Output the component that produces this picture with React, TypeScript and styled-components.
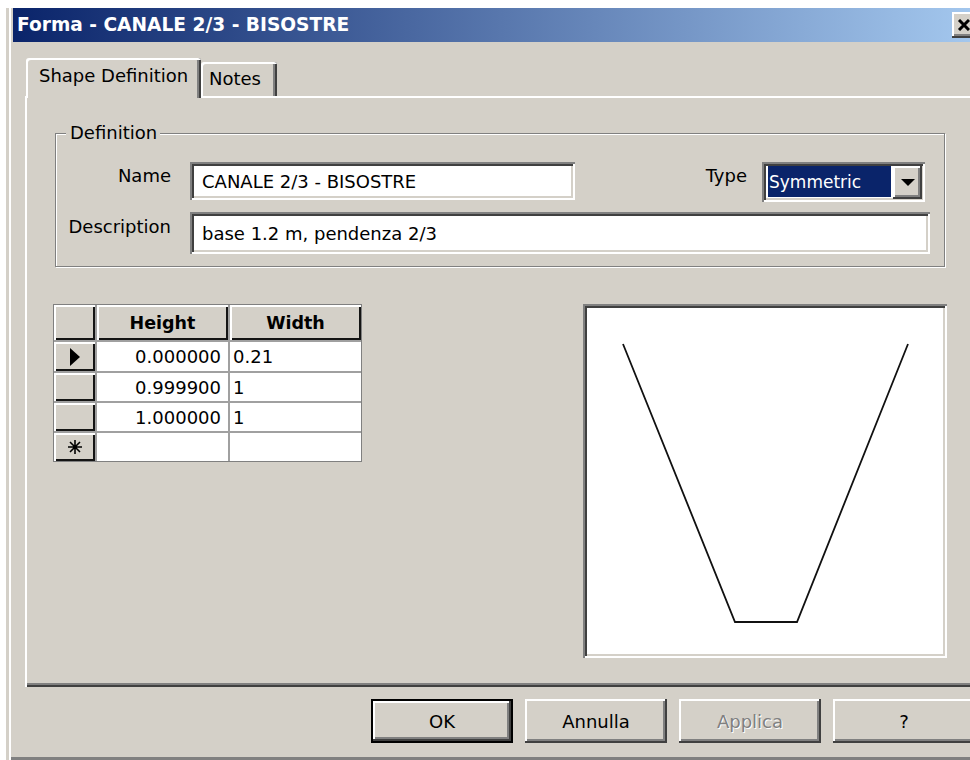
import React from "react";
import styled, { createGlobalStyle, css } from "styled-components";

const FACE = "#d4d0c8";
const SHADOW = "#808080";
const DARK = "#404040";
const FONT = `"DejaVu Sans", Verdana, sans-serif`;

const GlobalStyle = createGlobalStyle`
  html, body { margin: 0; padding: 0; background: #fff; overflow: hidden; }
  body { font-family: ${FONT}; font-size: 18px; color: #000; }
  * { box-sizing: border-box; }
`;

const raised = css`
  background: ${FACE};
  box-shadow: inset -2px -2px 0 ${DARK}, inset 2px 2px 0 #fff, inset -4px -4px 0 ${SHADOW};
`;

const sunken = css`
  background: #fff;
  box-shadow: inset 2px 2px 0 ${SHADOW}, inset -2px -2px 0 #fff, inset 4px 4px 0 ${DARK},
    inset -4px -4px 0 ${FACE};
`;

const Page = styled.div`
  width: 100vw;
  height: 100vh;
  padding: 8px 0 0 6px;
  overflow: hidden;
`;

const Window = styled.div`
  width: 990px;
  height: 752px;
  flex-shrink: 0;
  display: flex;
  flex-direction: column;
  background: ${FACE};
  padding: 0 7px 3px 7px;
  box-shadow: inset 3px 0 0 ${FACE}, inset 5px 0 0 #fff, inset 0 -3px 0 ${SHADOW};
`;

const TitleBar = styled.div`
  height: 34px;
  flex-shrink: 0;
  display: flex;
  align-items: center;
  justify-content: space-between;
  padding: 0 13px 0 4px;
  background: linear-gradient(to right, #0a246a, #a6caf0);
`;

const TitleText = styled.span`
  color: #fff;
  font-weight: bold;
  font-size: 18.6px;
  line-height: 22px;
  white-space: nowrap;
`;

const CloseButton = styled.div`
  ${raised};
  width: 24px;
  height: 26px;
  display: flex;
  align-items: center;
  justify-content: center;
`;

const Body = styled.div`
  flex: 1;
  display: flex;
  flex-direction: column;
  padding: 16px 12px 0 12px;
`;

const TabStrip = styled.div`
  height: 38px;
  display: flex;
  align-items: flex-end;
  padding-left: 1px;
  position: relative;
  z-index: 1;
`;

const Tab = styled.div<{ $active?: boolean; $w: number }>`
  width: ${(p) => p.$w}px;
  height: ${(p) => (p.$active ? 40 : 34)}px;
  margin-bottom: ${(p) => (p.$active ? -2 : 0)}px;
  align-self: ${(p) => (p.$active ? "flex-start" : "flex-end")};
  display: flex;
  align-items: center;
  padding-left: ${(p) => (p.$active ? 13 : 8)}px;
  padding-bottom: ${(p) => (p.$active ? 4 : 0)}px;
  background: ${FACE};
  border-radius: 3px 3px 0 0;
  box-shadow: inset 2px 2px 0 #fff, inset -2px 0 0 ${DARK}, inset -4px 0 0 ${SHADOW};
  white-space: nowrap;
  line-height: 20px;
`;

const Panel = styled.div`
  flex: 1;
  display: flex;
  flex-direction: column;
  padding: 27px 30px 0 28px;
  box-shadow: inset 2px 2px 0 #fff, inset -2px -2px 0 ${DARK}, inset -4px -4px 0 ${SHADOW};
`;

const GroupBox = styled.fieldset`
  margin: 0 2px;
  padding: 19px 19px 12px 0;
  border: 1px solid ${SHADOW};
  box-shadow: inset 1px 1px 0 #fff, 1px 1px 0 #fff;
  min-width: 0;
`;

const Legend = styled.legend`
  margin-left: 10px;
  padding: 0 3px 0 4px;
  line-height: 20px;
  background: ${FACE};
`;

const FormRow = styled.div<{ $mt?: number }>`
  display: flex;
  align-items: flex-start;
  margin-top: ${(p) => p.$mt ?? 0}px;
`;

const FieldLabel = styled.div<{ $w?: number; $gap: number; $top: number }>`
  width: ${(p) => (p.$w ? `${p.$w}px` : "auto")};
  flex-shrink: 0;
  text-align: right;
  margin-right: ${(p) => p.$gap}px;
  padding-top: ${(p) => p.$top}px;
  line-height: 20px;
  white-space: nowrap;
`;

const TextField = styled.div<{ $w: number; $h: number }>`
  ${sunken};
  width: ${(p) => p.$w}px;
  height: ${(p) => p.$h}px;
  flex-shrink: 0;
  display: flex;
  align-items: center;
  padding: 0 8px 0 12px;
  white-space: nowrap;
`;

const Spacer = styled.div`
  flex: 1;
`;

const Combo = styled.div`
  ${sunken};
  width: 163px;
  height: 40px;
  flex-shrink: 0;
  display: flex;
  align-items: stretch;
  padding: 4px 3px 3px 6px;
`;

const ComboValue = styled.div`
  flex: 1;
  margin: 0 2px 2px 0;
  background: #0a246a;
  color: #fff;
  display: flex;
  align-items: center;
  padding-left: 1px;
  font-size: 17px;
`;

const ComboArrow = styled.div`
  ${raised};
  width: 29px;
  display: flex;
  align-items: center;
  justify-content: center;
`;

const LowerRow = styled.div`
  display: flex;
  align-items: flex-start;
  justify-content: space-between;
  margin-top: 37px;
`;

const Grid = styled.div`
  display: grid;
  grid-template-columns: 41px 131px 131px;
  grid-template-rows: 35px 29px 28px 28px 28px;
  gap: 2px;
  background: #a0a0a0;
  border: 1px solid ${SHADOW};
`;

const HeaderCell = styled.div`
  background: ${FACE};
  box-shadow: inset 2px 2px 0 #fff, inset -2px -2px 0 #141414;
  display: flex;
  align-items: center;
  justify-content: center;
  font-weight: bold;
  font-size: 17.5px;
`;

const DataCell = styled.div<{ $align: "left" | "right" }>`
  background: #fff;
  display: flex;
  align-items: center;
  justify-content: ${(p) => (p.$align === "right" ? "flex-end" : "flex-start")};
  padding: ${(p) => (p.$align === "right" ? "0 7px 0 0" : "0 0 0 3px")};
  white-space: nowrap;
`;

const Preview = styled.div`
  ${sunken};
  width: 364px;
  height: 354px;
  flex-shrink: 0;
`;

const ButtonRow = styled.div`
  display: flex;
  justify-content: flex-end;
  gap: 12px;
  margin: 12px 0 14px;
  padding-right: 2px;
`;

const Button = styled.div<{ $default?: boolean; $disabled?: boolean }>`
  width: 142px;
  height: 44px;
  display: flex;
  align-items: center;
  justify-content: center;
  background: ${FACE};
  color: ${(p) => (p.$disabled ? SHADOW : "#000")};
  text-shadow: ${(p) => (p.$disabled ? "1px 1px 0 #fff" : "none")};
  box-shadow: ${(p) =>
    p.$default
      ? `inset 0 0 0 2px #000, inset -4px -4px 0 ${DARK}, inset 4px 4px 0 #fff, inset -6px -6px 0 ${SHADOW}`
      : `inset -2px -2px 0 ${DARK}, inset 2px 2px 0 #fff, inset -4px -4px 0 ${SHADOW}`};
`;

const rows = [
  { h: "0.000000", w: "0.21", current: true },
  { h: "0.999900", w: "1" },
  { h: "1.000000", w: "1" },
];

const CloseGlyph = () => (
  <svg width="14" height="12" viewBox="0 0 14 12">
    <path d="M2 1 L12 11 M12 1 L2 11" stroke="#000" strokeWidth="3" />
  </svg>
);

const CurrentRowMark = () => (
  <svg width="12" height="18" viewBox="0 0 12 18">
    <polygon points="1,0 11,9 1,18" fill="#000" />
  </svg>
);

const NewRowMark = () => (
  <svg width="16" height="16" viewBox="0 0 16 16">
    <path d="M8 1 V15 M1 8 H15 M3 3 L13 13 M13 3 L3 13" stroke="#000" strokeWidth="1.6" />
  </svg>
);

const DownArrow = () => (
  <svg width="14" height="7" viewBox="0 0 14 7">
    <polygon points="0,0 14,0 7,7" fill="#000" />
  </svg>
);

// Cross section of the channel: sloped walls and a flat base
const ShapeDrawing = () => (
  <svg width="364" height="354" viewBox="0 0 364 354">
    <polyline
      points="40,40 152,318 214,318 325,40"
      fill="none"
      stroke="#111"
      strokeWidth="1.8"
    />
  </svg>
);

export default function App() {
  return (
    <>
      <GlobalStyle />
      <Page>
        <Window>
          <TitleBar>
            <TitleText>Forma - CANALE 2/3 - BISOSTRE</TitleText>
            <CloseButton>
              <CloseGlyph />
            </CloseButton>
          </TitleBar>
          <Body>
            <TabStrip>
              <Tab $active $w={175}>Shape Definition</Tab>
              <Tab $w={76}>Notes</Tab>
            </TabStrip>
            <Panel>
              <GroupBox>
                <Legend>Definition</Legend>
                <FormRow>
                  <FieldLabel $w={115} $gap={19} $top={4}>Name</FieldLabel>
                  <TextField $w={385} $h={38}>CANALE 2/3 - BISOSTRE</TextField>
                  <Spacer />
                  <FieldLabel $gap={15} $top={4}>Type</FieldLabel>
                  <Combo>
                    <ComboValue>Symmetric</ComboValue>
                    <ComboArrow>
                      <DownArrow />
                    </ComboArrow>
                  </Combo>
                </FormRow>
                <FormRow $mt={10}>
                  <FieldLabel $w={115} $gap={19} $top={5}>Description</FieldLabel>
                  <TextField $w={740} $h={42}>base 1.2 m, pendenza 2/3</TextField>
                </FormRow>
              </GroupBox>
              <LowerRow>
                <Grid>
                  <HeaderCell />
                  <HeaderCell>Height</HeaderCell>
                  <HeaderCell>Width</HeaderCell>
                  {rows.map((r) => (
                    <React.Fragment key={r.h}>
                      <HeaderCell>{r.current ? <CurrentRowMark /> : null}</HeaderCell>
                      <DataCell $align="right">{r.h}</DataCell>
                      <DataCell $align="left">{r.w}</DataCell>
                    </React.Fragment>
                  ))}
                  <HeaderCell>
                    <NewRowMark />
                  </HeaderCell>
                  <DataCell $align="right" />
                  <DataCell $align="left" />
                </Grid>
                <Preview>
                  <ShapeDrawing />
                </Preview>
              </LowerRow>
            </Panel>
            <ButtonRow>
              <Button $default>OK</Button>
              <Button>Annulla</Button>
              <Button $disabled>Applica</Button>
              <Button>?</Button>
            </ButtonRow>
          </Body>
        </Window>
      </Page>
    </>
  );
}
